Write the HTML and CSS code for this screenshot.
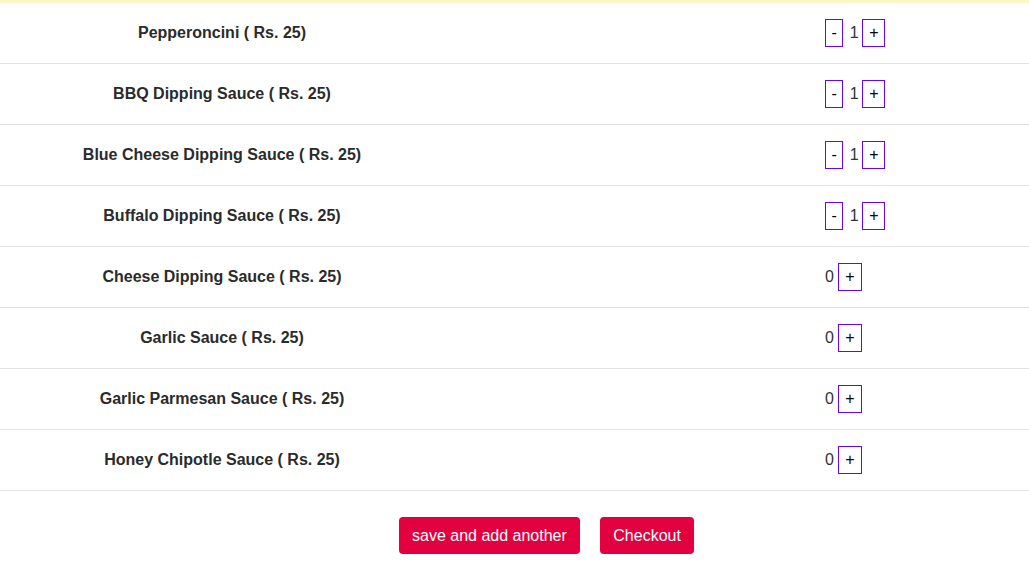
FILE: index.html
```html
<!DOCTYPE html>
<html>
<head>
<meta charset="utf-8">
<link rel="stylesheet" href="styles.css">
</head>
<body>
<div class="topbar"></div>
<div class="list">
  <div class="row"><div class="name">Pepperoncini ( Rs. 25)</div><div class="qty"><button class="qbtn minus">-</button> <span class="num">1</span> <button class="qbtn">+</button></div></div>
  <div class="row"><div class="name">BBQ Dipping Sauce ( Rs. 25)</div><div class="qty"><button class="qbtn minus">-</button> <span class="num">1</span> <button class="qbtn">+</button></div></div>
  <div class="row"><div class="name">Blue Cheese Dipping Sauce ( Rs. 25)</div><div class="qty"><button class="qbtn minus">-</button> <span class="num">1</span> <button class="qbtn">+</button></div></div>
  <div class="row"><div class="name">Buffalo Dipping Sauce ( Rs. 25)</div><div class="qty"><button class="qbtn minus">-</button> <span class="num">1</span> <button class="qbtn">+</button></div></div>
  <div class="row"><div class="name">Cheese Dipping Sauce ( Rs. 25)</div><div class="qty"><span class="num">0</span> <button class="qbtn">+</button></div></div>
  <div class="row"><div class="name">Garlic Sauce ( Rs. 25)</div><div class="qty"><span class="num">0</span> <button class="qbtn">+</button></div></div>
  <div class="row"><div class="name">Garlic Parmesan Sauce ( Rs. 25)</div><div class="qty"><span class="num">0</span> <button class="qbtn">+</button></div></div>
  <div class="row"><div class="name">Honey Chipotle Sauce ( Rs. 25)</div><div class="qty"><span class="num">0</span> <button class="qbtn">+</button></div></div>
</div>
<div class="actions">
  <button class="action save">save and add another</button>
  <button class="action">Checkout</button>
</div>
</body>
</html>
```

FILE: styles.css
```css
* { box-sizing: border-box; }
html, body { margin: 0; padding: 0; background: #fff; }
body {
  font-family: "Liberation Sans", Arial, sans-serif;
  font-size: 16px;
  color: #333;
  width: 1029px;
  height: 583px;
  overflow: hidden;
}
.topbar { height: 3px; background: #fdf6c6; }
.row {
  display: grid;
  grid-template-columns: 444px 1fr;
  align-items: center;
  height: 61px;
  border-bottom: 1px solid #e2e2e2;
}
.name {
  text-align: center;
  font-weight: bold;
  color: #2b2b2b;
  line-height: 20px;
  padding-bottom: 1px;
}
.qty {
  padding-left: 381px;
  line-height: 28px;
  white-space: pre;
}
.num { color: #333; }
.minus + .num { margin: 0 -1px 0 2px; }
.qbtn {
  font-family: "Liberation Sans", Arial, sans-serif;
  font-size: 16px;
  line-height: 26px;
  height: 28px;
  padding: 0 6px;
  margin: 0;
  border: 1px solid #6a00ff;
  border-radius: 0;
  background: #fff;
  color: #000;
  vertical-align: middle;
}
.qbtn.minus { padding: 0 5.5px; }
.actions {
  display: flex;
  gap: 20px;
  padding-left: 399px;
  padding-top: 26px;
}
.action {
  font-family: "Liberation Sans", Arial, sans-serif;
  font-size: 16px;
  line-height: 19px;
  padding: 9px 13.5px;
  border: none;
  border-radius: 4px;
  background: #e2003f;
  color: #fff;
}
.action.save { padding: 9px 13px; }
```
